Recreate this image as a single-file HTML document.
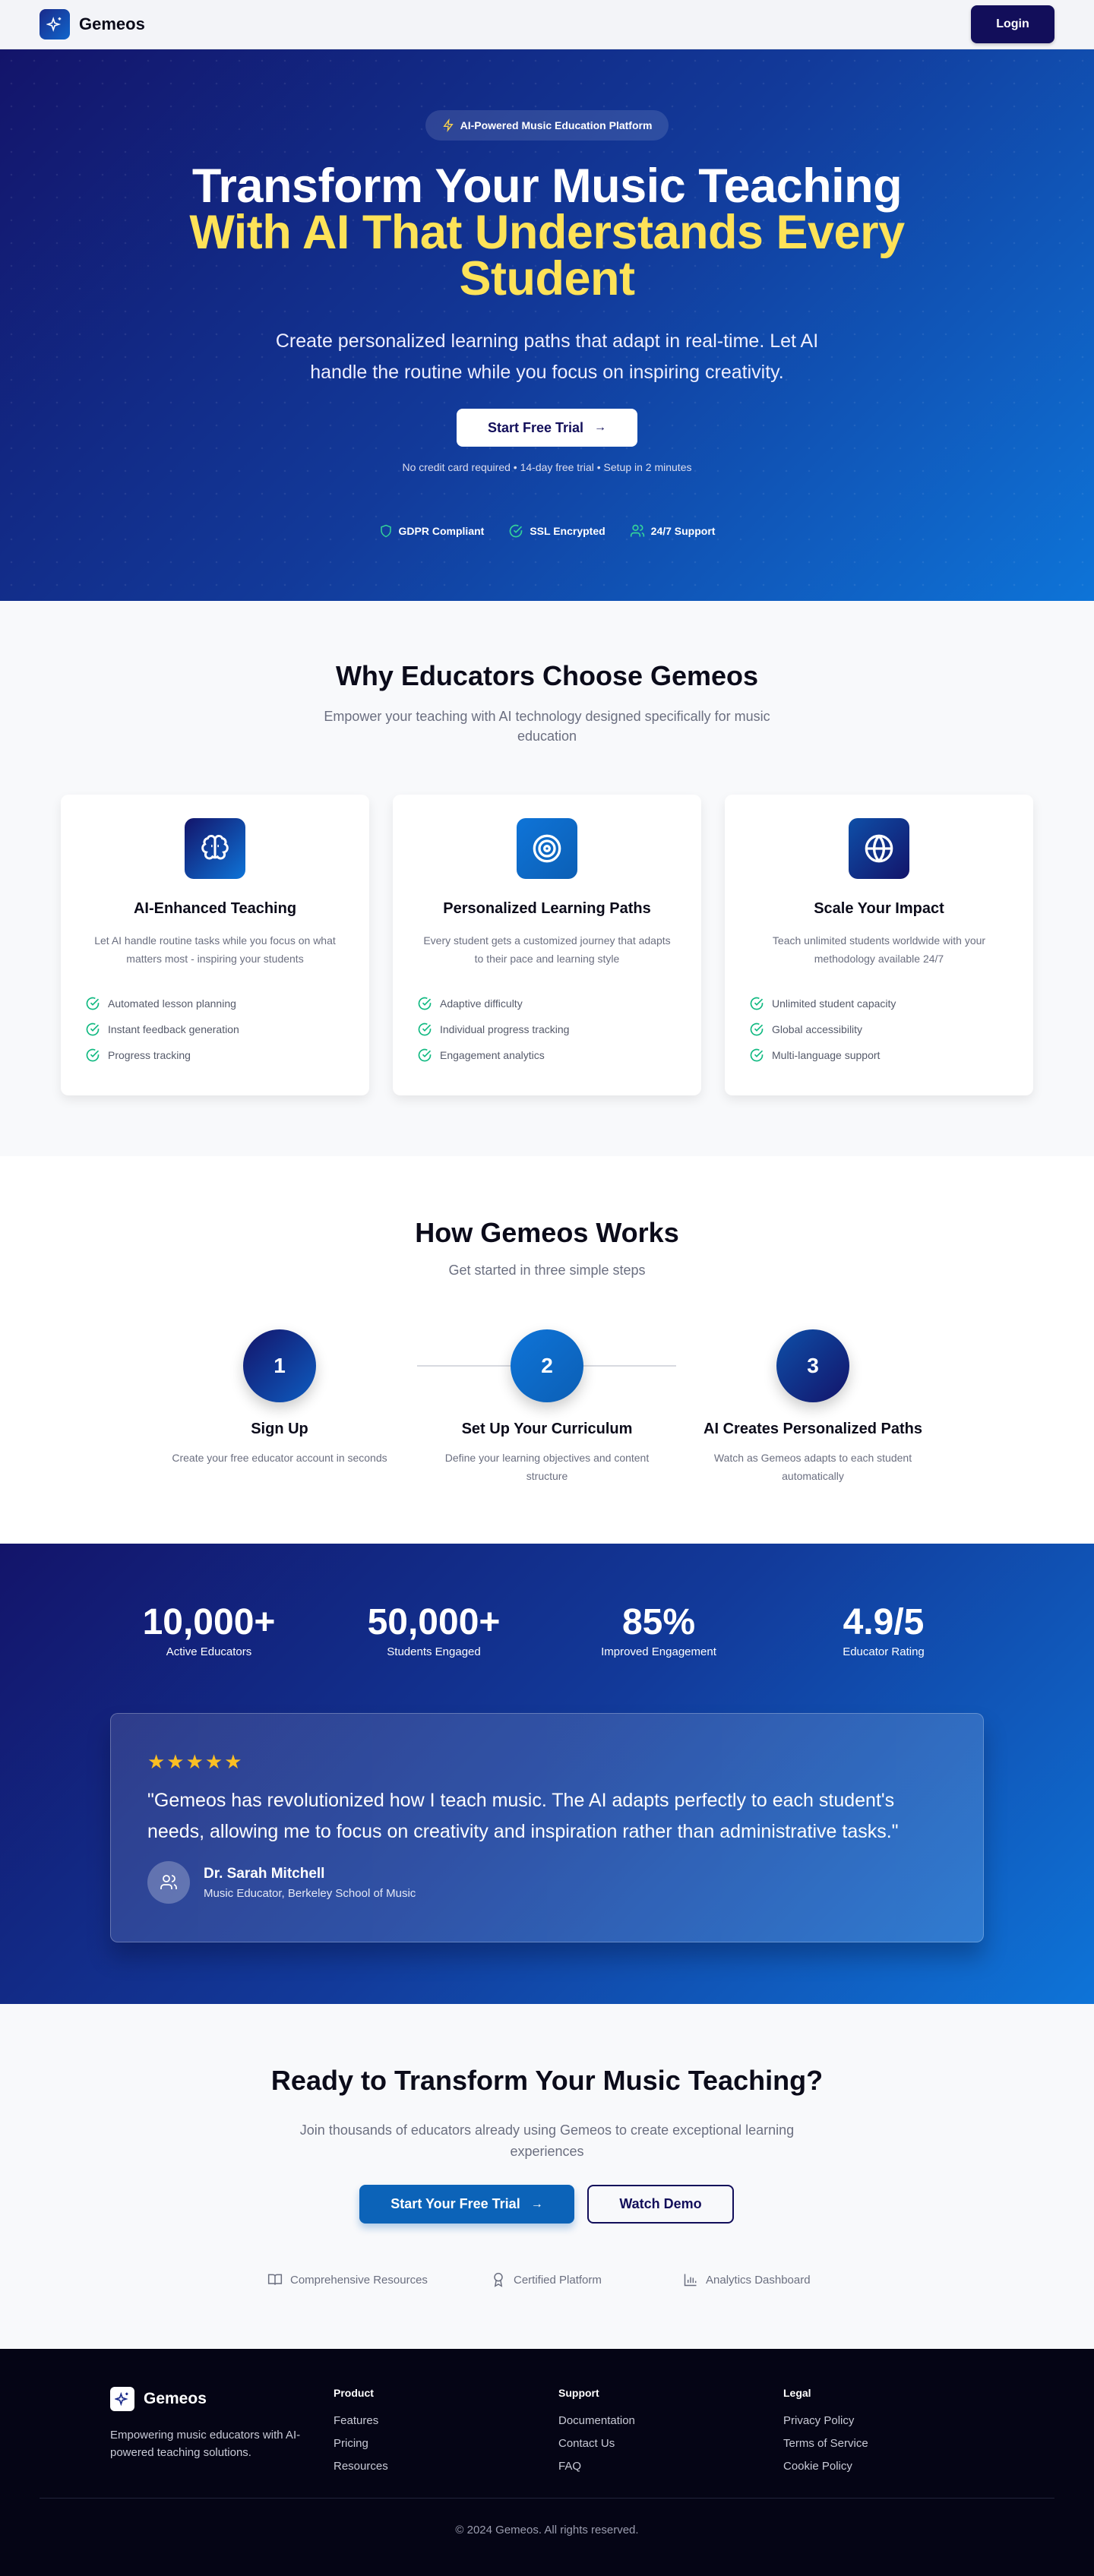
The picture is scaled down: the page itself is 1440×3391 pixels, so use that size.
<!DOCTYPE html>
<html><head><meta charset="utf-8"><style>
*{box-sizing:border-box;margin:0;padding:0}
body{width:1440px;font-family:"Liberation Sans",sans-serif;color:#0b0b1a;background:#f8f9fb}
.sec{position:relative;width:1440px;overflow:hidden}
nav{height:65px;background:#f3f4f8;position:relative;border-bottom:1px solid #e5e7eb}
.logo{position:absolute;left:52px;top:12px;display:flex;align-items:center;gap:12px;font-weight:700;font-size:22px}
.logo .ic{width:40px;height:40px;border-radius:8px;background:linear-gradient(135deg,#1a2a8a,#1066cc);display:flex;align-items:center;justify-content:center}
.login{position:absolute;left:1278px;top:7px;width:110px;height:50px;background:#120e5a;color:#fff;border-radius:8px;font-weight:700;font-size:16px;display:flex;align-items:center;justify-content:center;box-shadow:0 2px 4px rgba(0,0,0,.2)}
.hero{height:726px;background:linear-gradient(135deg,#13146a 0%,#123a9a 50%,#0e74d8 100%)}
.hero:before{content:"";position:absolute;inset:0;background-image:radial-gradient(rgba(255,255,255,.08) 1px,transparent 1.5px);background-size:30px 30px}
.badge{position:absolute;left:560px;top:80px;width:320px;height:40px;border-radius:20px;background:rgba(255,255,255,.12);color:#fff;font-size:14px;font-weight:700;display:flex;align-items:center;justify-content:center;gap:8px}
h1{position:absolute;left:0;right:0;top:150px;text-align:center;font-size:63px;line-height:61px;font-weight:700;color:#fff;letter-spacing:-.5px}
h1 span{color:#fde258}
.sub{position:absolute;left:0;right:0;top:364px;text-align:center;color:#eef;font-size:25px;line-height:41px}
.btnw{position:absolute;left:601px;top:473px;width:238px;height:50px;border-radius:8px;background:#fff;color:#120e5a;font-weight:700;font-size:18px;display:flex;align-items:center;justify-content:center;gap:14px}
.small{position:absolute;left:0;right:0;top:542px;text-align:center;color:#dde;font-size:14px}
.trust{position:absolute;left:0;right:0;top:624px;display:flex;justify-content:center;gap:32px;color:#fff;font-size:14px;font-weight:700}
.trust div{display:flex;align-items:center;gap:8px}
.why{height:731px;background:#f8f9fb}
h2{font-size:36px;font-weight:700;text-align:center;color:#0b0b1a}
.lead{color:#6b6f80;font-size:18px;line-height:26px;text-align:center}
.card{position:absolute;top:255px;width:406px;height:396px;background:#fff;border-radius:10px;box-shadow:0 6px 14px rgba(0,0,0,.08);text-align:center}
.card .ib{width:80px;height:80px;margin:31px auto 0;border-radius:12px;display:flex;align-items:center;justify-content:center}
.card h3{font-size:20px;margin-top:28px}
.card p{font-size:14px;line-height:24px;color:#6b6f80;margin:18px 40px 0}
.card ul{list-style:none;text-align:left;margin:30px 0 0 32px}
.card li{font-size:14px;color:#555a6a;height:34px;display:flex;align-items:center;gap:10px}
.how{height:510px;background:#fff}
.step{position:absolute;top:228px;width:360px;text-align:center}
.circ{width:96px;height:96px;border-radius:50%;margin:0 auto;color:#fff;font-size:28px;font-weight:700;display:flex;align-items:center;justify-content:center;box-shadow:0 8px 18px rgba(0,0,0,.2)}
.step h3{font-size:20px;margin-top:24px}
.step p{font-size:14px;line-height:24px;color:#6b6f80;margin:14px 30px 0}
.stats{height:606px;background:linear-gradient(135deg,#13146a 0%,#123a9a 50%,#0e74d8 100%);color:#fff}
.st{position:absolute;top:74px;width:300px;text-align:center}
.st b{display:block;font-size:48px;line-height:60px}
.st span{font-size:15px}
.tc{position:absolute;left:145px;top:223px;width:1150px;height:302px;border-radius:10px;background:linear-gradient(90deg,rgba(255,255,255,.12),rgba(255,255,255,.14));border:1px solid rgba(255,255,255,.25);box-shadow:0 20px 30px rgba(0,0,20,.25);padding:50px 48px}
.q{font-size:25px;line-height:41px;margin-top:18px}
.au{display:flex;align-items:center;gap:18px;margin-top:18px}
.av{width:56px;height:56px;border-radius:50%;background:rgba(255,255,255,.25);display:flex;align-items:center;justify-content:center}
.cta{height:454px;background:#f8f9fb}
.b1{position:absolute;left:473px;top:238px;width:283px;height:51px;border-radius:8px;background:#0c63b8;color:#fff;font-weight:700;font-size:18px;display:flex;align-items:center;justify-content:center;gap:14px;box-shadow:0 6px 10px rgba(12,99,184,.3)}
.b2{position:absolute;left:773px;top:238px;width:193px;height:51px;border-radius:8px;border:2px solid #120e5a;color:#120e5a;font-weight:700;font-size:18px;display:flex;align-items:center;justify-content:center}
.feat{position:absolute;top:353px;display:flex;align-items:center;gap:10px;color:#6b6f80;font-size:15px}
footer{height:299px;background:#050515;color:#fff;position:relative}
.fc{position:absolute;top:50px}
.fc h4{font-size:14px;margin-bottom:14px}
.fc a{display:block;color:#c8cad6;font-size:15px;line-height:30px;text-decoration:none}
</style></head><body>
<nav><div class="logo"><div class="ic"><svg width="22" height="22" viewBox="0 0 24 24" fill="none" stroke="#fff" stroke-width="1.8"><path d="M10 4l2 6 6 2-6 2-2 6-2-6-6-2 6-2z"/><path d="M19 2v4M17 4h4"/></svg></div>Gemeos</div><div class="login">Login</div></nav>
<div class="sec hero">
<div class="badge"><svg width="16" height="18" viewBox="0 0 24 24" fill="none" stroke="#fcd34d" stroke-width="2"><path d="M13 2L4 14h8l-1 8 9-12h-8z"/></svg>AI-Powered Music Education Platform</div>
<h1>Transform Your Music Teaching<br><span>With AI That Understands Every<br>Student</span></h1>
<div class="sub">Create personalized learning paths that adapt in real-time. Let AI<br>handle the routine while you focus on inspiring creativity.</div>
<div class="btnw">Start Free Trial <span style="font-size:16px">→</span></div>
<div class="small">No credit card required • 14-day free trial • Setup in 2 minutes</div>
<div class="trust"><div><svg width="18" height="20" viewBox="0 0 24 24" fill="none" stroke="#34d399" stroke-width="2"><path d="M12 2l8 3v6c0 5-3.5 9-8 11-4.5-2-8-6-8-11V5z"/></svg>GDPR Compliant</div><div><svg width="20" height="20" viewBox="0 0 24 24" fill="none" stroke="#34d399" stroke-width="2"><path d="M21 11v1a9 9 0 11-5-8"/><path d="M9 11l3 3 9-9"/></svg>SSL Encrypted</div><div><svg width="20" height="20" viewBox="0 0 24 24" fill="none" stroke="#34d399" stroke-width="2"><circle cx="9" cy="7" r="4"/><path d="M2 21v-2a4 4 0 014-4h6a4 4 0 014 4v2M16 3a4 4 0 010 8M22 21v-2a4 4 0 00-3-4"/></svg>24/7 Support</div></div>
</div>
<div class="sec why">
<h2 style="position:absolute;left:0;right:0;top:78px">Why Educators Choose Gemeos</h2>
<div class="lead" style="position:absolute;left:395px;width:650px;top:139px">Empower your teaching with AI technology designed specifically for music education</div>
<div class="card" style="left:80px"><div class="ib" style="background:linear-gradient(135deg,#13146a,#0e74d8)"><svg width="40" height="40" viewBox="0 0 24 24" fill="none" stroke="#fff" stroke-width="1.8"><path d="M12 5a3 3 0 00-5.8-1A3 3 0 004 8.5 3.5 3.5 0 005 15a3 3 0 005 3.5 3 3 0 002 .5V5zM12 5a3 3 0 015.8-1A3 3 0 0120 8.5 3.5 3.5 0 0119 15a3 3 0 01-5 3.5 3 3 0 01-2 .5"/><path d="M9 10h1M14 10h1M12 12v4"/></svg></div><h3>AI-Enhanced Teaching</h3><p>Let AI handle routine tasks while you focus on what matters most - inspiring your students</p><ul><li><svg width="20" height="20" viewBox="0 0 24 24" fill="none" stroke="#10b981" stroke-width="2"><path d="M21 11v1a9 9 0 11-5-8"/><path d="M9 11l3 3 9-9"/></svg>Automated lesson planning</li><li><svg width="20" height="20" viewBox="0 0 24 24" fill="none" stroke="#10b981" stroke-width="2"><path d="M21 11v1a9 9 0 11-5-8"/><path d="M9 11l3 3 9-9"/></svg>Instant feedback generation</li><li><svg width="20" height="20" viewBox="0 0 24 24" fill="none" stroke="#10b981" stroke-width="2"><path d="M21 11v1a9 9 0 11-5-8"/><path d="M9 11l3 3 9-9"/></svg>Progress tracking</li></ul></div>
<div class="card" style="left:517px"><div class="ib" style="background:linear-gradient(135deg,#0e74d8,#0c5fb5)"><svg width="40" height="40" viewBox="0 0 24 24" fill="none" stroke="#fff" stroke-width="2"><circle cx="12" cy="12" r="10"/><circle cx="12" cy="12" r="6"/><circle cx="12" cy="12" r="2"/></svg></div><h3>Personalized Learning Paths</h3><p>Every student gets a customized journey that adapts to their pace and learning style</p><ul><li><svg width="20" height="20" viewBox="0 0 24 24" fill="none" stroke="#10b981" stroke-width="2"><path d="M21 11v1a9 9 0 11-5-8"/><path d="M9 11l3 3 9-9"/></svg>Adaptive difficulty</li><li><svg width="20" height="20" viewBox="0 0 24 24" fill="none" stroke="#10b981" stroke-width="2"><path d="M21 11v1a9 9 0 11-5-8"/><path d="M9 11l3 3 9-9"/></svg>Individual progress tracking</li><li><svg width="20" height="20" viewBox="0 0 24 24" fill="none" stroke="#10b981" stroke-width="2"><path d="M21 11v1a9 9 0 11-5-8"/><path d="M9 11l3 3 9-9"/></svg>Engagement analytics</li></ul></div>
<div class="card" style="left:954px"><div class="ib" style="background:linear-gradient(135deg,#0e4fa8,#13146a)"><svg width="40" height="40" viewBox="0 0 24 24" fill="none" stroke="#fff" stroke-width="2"><circle cx="12" cy="12" r="10"/><path d="M2 12h20M12 2a15 15 0 010 20M12 2a15 15 0 000 20"/></svg></div><h3>Scale Your Impact</h3><p>Teach unlimited students worldwide with your methodology available 24/7</p><ul><li><svg width="20" height="20" viewBox="0 0 24 24" fill="none" stroke="#10b981" stroke-width="2"><path d="M21 11v1a9 9 0 11-5-8"/><path d="M9 11l3 3 9-9"/></svg>Unlimited student capacity</li><li><svg width="20" height="20" viewBox="0 0 24 24" fill="none" stroke="#10b981" stroke-width="2"><path d="M21 11v1a9 9 0 11-5-8"/><path d="M9 11l3 3 9-9"/></svg>Global accessibility</li><li><svg width="20" height="20" viewBox="0 0 24 24" fill="none" stroke="#10b981" stroke-width="2"><path d="M21 11v1a9 9 0 11-5-8"/><path d="M9 11l3 3 9-9"/></svg>Multi-language support</li></ul></div>
</div>
<div class="sec how">
<h2 style="position:absolute;left:0;right:0;top:80px">How Gemeos Works</h2>
<div class="lead" style="position:absolute;left:0;right:0;top:137px">Get started in three simple steps</div>
<div style="position:absolute;left:549px;width:341px;top:275px;height:2px;background:#d8dae0"></div>
<div class="step" style="left:188px"><div class="circ" style="background:linear-gradient(135deg,#13146a,#0e5cc0)">1</div><h3>Sign Up</h3><p>Create your free educator account in seconds</p></div>
<div class="step" style="left:540px"><div class="circ" style="background:linear-gradient(135deg,#0e74d8,#0c5fb5)">2</div><h3>Set Up Your Curriculum</h3><p>Define your learning objectives and content structure</p></div>
<div class="step" style="left:890px"><div class="circ" style="background:linear-gradient(135deg,#0e4fa8,#13146a)">3</div><h3>AI Creates Personalized Paths</h3><p>Watch as Gemeos adapts to each student automatically</p></div>
</div>
<div class="sec stats">
<div class="st" style="left:125px"><b>10,000+</b><span>Active Educators</span></div>
<div class="st" style="left:421px"><b>50,000+</b><span>Students Engaged</span></div>
<div class="st" style="left:717px"><b>85%</b><span>Improved Engagement</span></div>
<div class="st" style="left:1013px"><b>4.9/5</b><span>Educator Rating</span></div>
<div class="tc"><div style="color:#fbbf24;font-size:26px;letter-spacing:2px;line-height:26px">★★★★★</div>
<div class="q">"Gemeos has revolutionized how I teach music. The AI adapts perfectly to each student's needs, allowing me to focus on creativity and inspiration rather than administrative tasks."</div>
<div class="au"><div class="av"><svg width="24" height="24" viewBox="0 0 24 24" fill="none" stroke="#fff" stroke-width="1.8"><circle cx="9" cy="7" r="4"/><path d="M2 21v-2a4 4 0 014-4h6a4 4 0 014 4v2M16 3a4 4 0 010 8M22 21v-2a4 4 0 00-3-4"/></svg></div><div><div style="font-weight:700;font-size:19px">Dr. Sarah Mitchell</div><div style="font-size:15px;margin-top:6px;color:#e4e8f5">Music Educator, Berkeley School of Music</div></div></div></div>
</div>
<div class="sec cta">
<h2 style="position:absolute;left:0;right:0;top:80px">Ready to Transform Your Music Teaching?</h2>
<div class="lead" style="position:absolute;left:360px;width:720px;top:152px;line-height:28px">Join thousands of educators already using Gemeos to create exceptional learning experiences</div>
<div class="b1">Start Your Free Trial <span style="font-size:16px">→</span></div>
<div class="b2">Watch Demo</div>
<div class="feat" style="left:352px"><svg width="20" height="20" viewBox="0 0 24 24" fill="none" stroke="#6b6f80" stroke-width="1.8"><path d="M2 4h7a3 3 0 013 3v13a2 2 0 00-2-2H2zM22 4h-7a3 3 0 00-3 3v13a2 2 0 012-2h8z"/></svg>Comprehensive Resources</div>
<div class="feat" style="left:646px"><svg width="20" height="20" viewBox="0 0 24 24" fill="none" stroke="#6b6f80" stroke-width="1.8"><circle cx="12" cy="8" r="6"/><path d="M8.5 13L7 22l5-3 5 3-1.5-9"/></svg>Certified Platform</div>
<div class="feat" style="left:899px"><svg width="20" height="20" viewBox="0 0 24 24" fill="none" stroke="#6b6f80" stroke-width="1.8"><path d="M3 3v18h18M8 17v-5M12 17V8M16 17v-8M20 17v-3"/></svg>Analytics Dashboard</div>
</div>
<footer>
<div style="position:absolute;left:145px;top:50px"><div style="display:flex;align-items:center;gap:12px;font-weight:700;font-size:21px"><div style="width:32px;height:32px;border-radius:6px;background:#fff;display:flex;align-items:center;justify-content:center"><svg width="20" height="20" viewBox="0 0 24 24" fill="none" stroke="#1a2a8a" stroke-width="2"><path d="M10 4l2 6 6 2-6 2-2 6-2-6-6-2 6-2z"/><path d="M19 2v4M17 4h4"/></svg></div>Gemeos</div>
<div style="font-size:15px;line-height:23px;color:#c8cad6;margin-top:20px;width:270px">Empowering music educators with AI-powered teaching solutions.</div></div>
<div class="fc" style="left:439px"><h4>Product</h4><a>Features</a><a>Pricing</a><a>Resources</a></div>
<div class="fc" style="left:735px"><h4>Support</h4><a>Documentation</a><a>Contact Us</a><a>FAQ</a></div>
<div class="fc" style="left:1031px"><h4>Legal</h4><a>Privacy Policy</a><a>Terms of Service</a><a>Cookie Policy</a></div>
<div style="position:absolute;left:52px;right:52px;top:196px;height:1px;background:#22243a"></div>
<div style="position:absolute;left:0;right:0;top:230px;text-align:center;color:#9a9cae;font-size:15px">© 2024 Gemeos. All rights reserved.</div>
</footer>
</body></html>
